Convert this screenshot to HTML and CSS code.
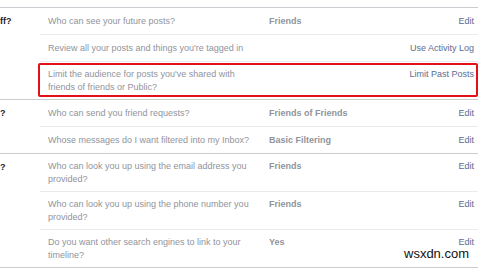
FILE: index.html
```html
<!DOCTYPE html>
<html>
<head>
<meta charset="utf-8">
<link rel="stylesheet" href="styles.css">
</head>
<body>
<div class="page">
  <section class="section">
    <div class="label">ff?</div>
    <div class="rows">
      <div class="row"><div class="q">Who can see your future posts?</div><div class="v">Friends</div><div class="a">Edit</div></div>
      <div class="row"><div class="q wide">Review all your posts and things you're tagged in</div><div class="a">Use Activity Log</div></div>
      <div class="row two hl"><div class="q">Limit the audience for posts you've shared with friends of friends or Public?</div><div class="v"></div><div class="a">Limit Past Posts</div></div>
    </div>
  </section>
  <section class="section">
    <div class="label">?</div>
    <div class="rows">
      <div class="row"><div class="q">Who can send you friend requests?</div><div class="v">Friends of Friends</div><div class="a">Edit</div></div>
      <div class="row"><div class="q">Whose messages do I want filtered into my Inbox?</div><div class="v">Basic Filtering</div><div class="a">Edit</div></div>
    </div>
  </section>
  <section class="section">
    <div class="label">?</div>
    <div class="rows">
      <div class="row two"><div class="q">Who can look you up using the email address you provided?</div><div class="v">Friends</div><div class="a">Edit</div></div>
      <div class="row two"><div class="q">Who can look you up using the phone number you provided?</div><div class="v">Friends</div><div class="a">Edit</div></div>
      <div class="row two"><div class="q">Do you want other search engines to link to your timeline?</div><div class="v">Yes</div><div class="a">Edit</div></div>
    </div>
  </section>
  <div class="mark">wsxdn.com</div>
</div>
</body>
</html>
```

FILE: styles.css
```css
html, body {
  margin: 0;
  padding: 0;
  background: #fff;
}
body {
  font-family: "Liberation Sans", Arial, sans-serif;
  font-size: 9px;
  line-height: 13px;
  color: #90949c;
}
.page {
  position: relative;
  width: 478px;
  padding-top: 7px;
}
.section {
  display: grid;
  grid-template-columns: 40px 1fr;
  border-top: 1px solid #c9ccd1;
}
.section:last-of-type {
  border-bottom: 1px solid #c9ccd1;
}
.label {
  font-weight: bold;
  color: #1d2129;
  padding-top: 7px;
}
.rows {
  display: flex;
  flex-direction: column;
}
.row {
  position: relative;
  display: grid;
  grid-template-columns: 221px 1fr auto;
  align-items: start;
  padding: 7px 4px 6px 8px;
  border-top: 1px solid #e9ebee;
}
.row:first-child {
  border-top: none;
}
.row.two {
  padding: 6px 4px 5px 8px;
}
.q {
  padding-right: 8px;
}
.q.wide {
  grid-column: 1 / 3;
}
.v {
  font-weight: bold;
}
.a {
  color: #5b6c91;
  text-align: right;
}
.row.hl::after {
  content: "";
  position: absolute;
  top: 1px;
  bottom: 2px;
  left: -2px;
  right: 0;
  border: 2px solid #e3101a;
  border-radius: 2px;
}
.mark {
  position: absolute;
  left: 404px;
  top: 246px;
  font-family: "Liberation Sans", Arial, sans-serif;
  font-size: 13px;
  line-height: 16px;
  color: #111;
  background: rgba(255,255,255,0.6);
}
```
